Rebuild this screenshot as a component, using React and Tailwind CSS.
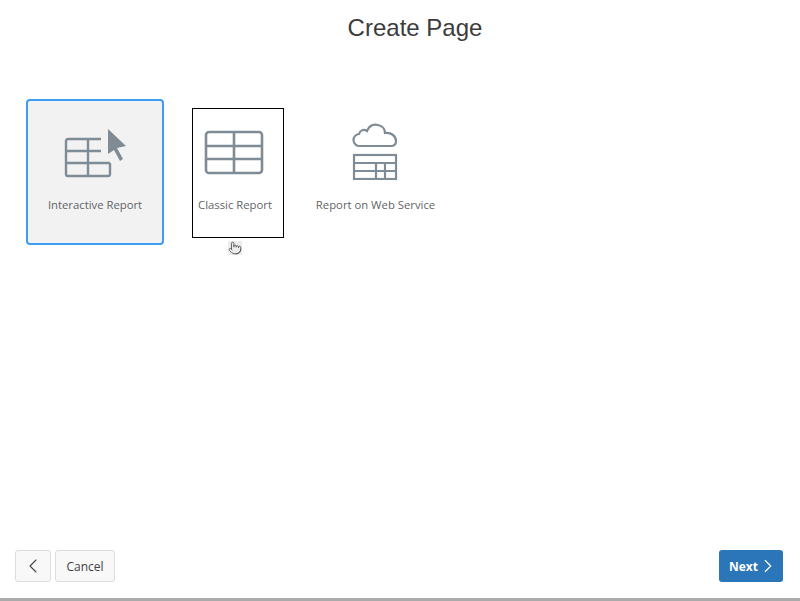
import React from "react";
import { ChevronLeft, ChevronRight, Pointer } from "lucide-react";

const InteractiveIcon = () => (
  <svg width="64" height="52" viewBox="0 0 64 52" fill="none" stroke="#7f8c96" strokeWidth="2.4">
    <path d="M38 11H5a2 2 0 0 0-2 2v33a2 2 0 0 0 2 2h40a2 2 0 0 0 2-2V35" />
    <path d="M3 23h35M3 35h44M25 11v37" />
    <path d="M45 1l18 17-9 2 6 11-3 2-6-11-6 4z" fill="#7f8c96" stroke="none" />
  </svg>
);

const ClassicIcon = () => (
  <svg width="60" height="45" viewBox="0 0 60 45" fill="none" stroke="#7f8c96" strokeWidth="2.6">
    <rect x="2" y="2" width="56" height="41" rx="3" />
    <path d="M2 16h56M2 29h56M30 2v41" />
  </svg>
);

const WebServiceIcon = () => (
  <svg width="46" height="57" viewBox="0 0 46 57" fill="none" stroke="#7f8c96" strokeWidth="2.2">
    <path d="M8 23a6 6 0 0 1-1-12c1-4 5-5 8-3 2-5 6-7 11-6 5 1 7 5 7 8 6-1 11 3 11 8 0 3-2 5-5 5z" />
    <rect x="2" y="32" width="42" height="24" />
    <path d="M2 40h42M2 48h42M24 40v16M33 40v16" />
  </svg>
);

const Card = ({ icon, label, className, labelClass }) => (
  <div className={`flex flex-col items-center rounded ${className}`}>
    {icon}
    <span className={`text-[11.3px] leading-4 text-[#5f6468] whitespace-nowrap ${labelClass}`}>{label}</span>
  </div>
);

export default function App() {
  return (
    <div className="flex flex-col h-[601px] w-[800px] bg-white border-b-[3px] border-[#aaaaaa] font-['Open_Sans',sans-serif] overflow-hidden">
      <h1 className="pl-[30px] pt-[12px] h-[99px] text-center text-[24px] leading-8 text-[#3c3c3c] font-['Liberation_Sans',sans-serif]">
        Create Page
      </h1>

      <div className="flex items-start flex-1 pl-[26px]">
        <Card
          className="w-[138px] h-[146px] border-2 border-[#3d9df0] bg-[#f2f2f2] pt-[27px]"
          icon={<InteractiveIcon />}
          label="Interactive Report"
          labelClass="mt-[17px]"
        />
        <div className="relative ml-[28px] mt-[9px]">
          <Card
            className="w-[92px] h-[130px] border border-black rounded-none pt-[21px]"
            icon={<div className="-ml-[8px]"><ClassicIcon /></div>}
            label="Classic Report"
            labelClass="mt-[22px] -ml-[6px]"
          />
          <div className="absolute left-[36px] top-[133px] bg-[#ececec]">
            <Pointer size={14} strokeWidth={1.5} className="text-[#555555]" />
          </div>
        </div>
        <Card
          className="ml-[32px] mt-[24px] w-[119px]"
          icon={<div className="-ml-[2px]"><WebServiceIcon /></div>}
          label="Report on Web Service"
          labelClass="mt-[17px]"
        />
      </div>

      <div className="flex items-center justify-between h-[32px] mb-[16px] px-[15px] pr-[17px] text-[12px]">
        <div className="flex gap-1">
          <button className="flex items-center justify-center w-[36px] h-[32px] rounded-[3px] border border-[#dcdcdc] bg-[#f8f8f8] text-[#444444]">
            <ChevronLeft size={24} strokeWidth={1.1} />
          </button>
          <button className="w-[60px] h-[32px] pt-[2px] rounded-[3px] border border-[#dcdcdc] bg-[#f8f8f8] text-[#404040]">
            Cancel
          </button>
        </div>
        <button className="flex items-center justify-center w-[64px] h-[32px] pl-[2px] rounded-[3px] bg-[#2a76b8] text-white font-bold">
          <span className="pt-[1px]">Next</span>
          <ChevronRight size={22} strokeWidth={1.3} className="-ml-[1px] -mr-[4px]" />
        </button>
      </div>
    </div>
  );
}
